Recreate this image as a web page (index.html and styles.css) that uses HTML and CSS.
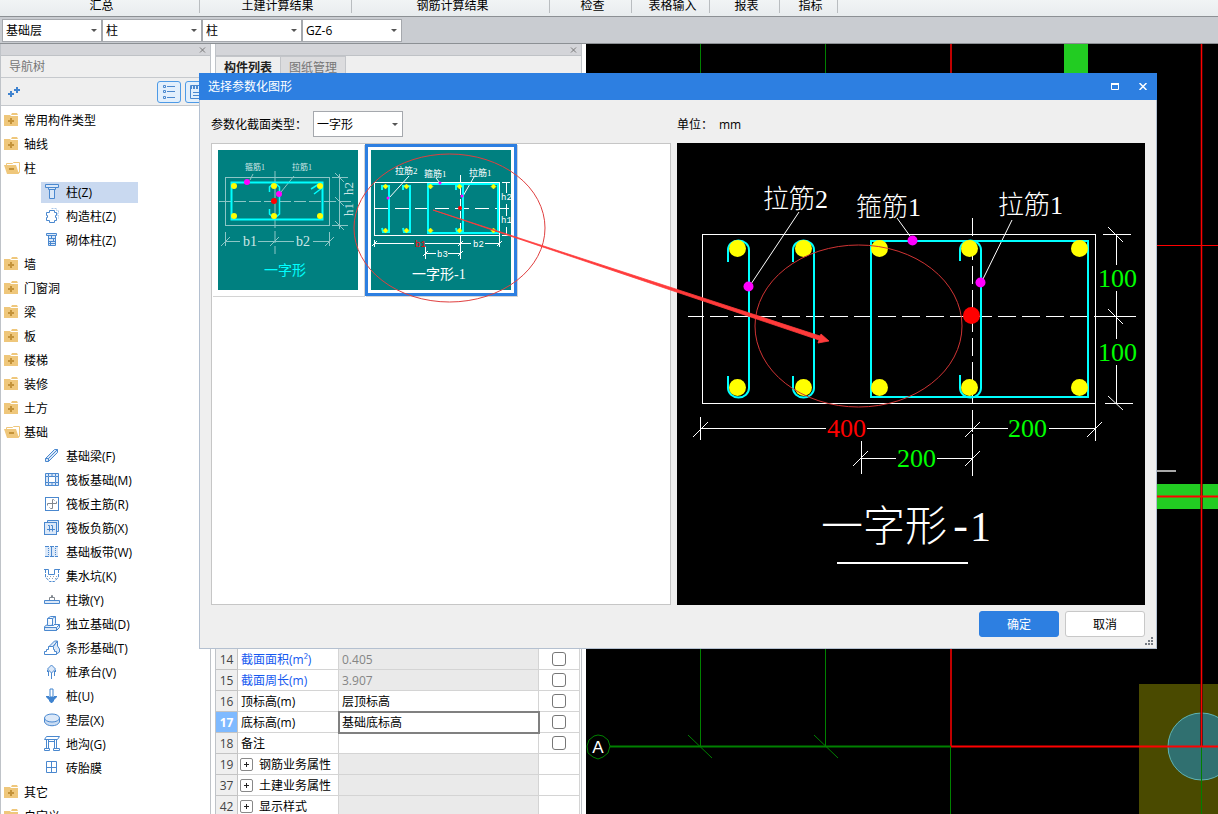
FILE: index.html
```html
<!DOCTYPE html>
<html lang="zh-CN">
<head>
    <meta charset="UTF-8">
    <meta name="viewport" content="width=device-width, initial-scale=1.0">
    <title>选择参数化图形</title>
    <link rel="stylesheet" href="styles.css">
</head>
<body>
    <!-- 图标 -->
    <svg class="sprite" aria-hidden="true">
        <symbol id="i-folder" viewBox="0 0 16 16">
            <path d="M8 1h5l1 2H7z" fill="#efc77b"/>
            <path d="M0 3h6l1 1h7v10H0z" fill="#efc77b"/>
            <path d="M7 6v6M4 9h6" stroke="#c4933a" stroke-width="2"/>
        </symbol>
        <symbol id="i-open" viewBox="0 0 16 16">
            <path d="M2.500 6V3.500h6l1-1h6v10h-3z" fill="#fff" stroke="#efc77b"/>
            <path d="M0 5h12l3 9H3z" fill="#efc77b"/>
            <path d="M5 9h5" stroke="#c4933a" stroke-width="2"/>
        </symbol>
        <symbol id="i-column" viewBox="0 0 16 16">
            <path d="M1.500 0.500h13v3h-13zM4.500 3.500h7v2h-7zM5.500 5.500h5v9h-5z" fill="#dbe8f8" stroke="#4a88cf"/>
        </symbol>
        <symbol id="i-gz" viewBox="0 0 16 16">
            <path d="M5.500 2.500h5v2h2v3h-1v2h1v3h-2v2h-5v-2h-3v-3h1v-2h-1v-3h3z" fill="#fff" stroke="#4a88cf"/>
            <path d="M7.500 0.500h5v2h2v3h-1v2h1v3" fill="none" stroke="#a9c6e8" stroke-dasharray="2 1"/>
        </symbol>
        <symbol id="i-brick" viewBox="0 0 16 16">
            <path d="M2.500 1.500h10v2h-10zM4.500 3.500h7v10h-7zM4 6.500h7M4 9.500h7M4 11.500h7M7.500 4v2M9.500 7v2M6.500 10v3" fill="#dbe8f8" stroke="#4a88cf"/>
        </symbol>
        <symbol id="i-beam" viewBox="0 0 16 16">
            <path d="M1.500 10.500l9-9h3v3l-9 9h-3zM1.500 10.500h3v3M4.500 10.500l9-9" fill="#dbe8f8" stroke="#4a88cf"/>
        </symbol>
        <symbol id="i-raft" viewBox="0 0 16 16">
            <path d="M1.500 1.500h13v12h-13zM4.500 4.500h7v6h-7zM4.500 1v3M11.500 1v3M4.500 11v3M11.500 11v3M1 4.500h3M1 10.500h3M12 4.500h3M12 10.500h3M8 2v3M8 10v3" fill="#dbe8f8" stroke="#4a88cf"/>
            <rect x="5" y="5" width="6" height="5" fill="#fff"/>
        </symbol>
        <symbol id="i-main" viewBox="0 0 16 16">
            <rect x="1.500" y="1.500" width="13" height="13" fill="#fff" stroke="#4a88cf"/>
            <path d="M3.500 9.500v-2h9v-2M10.500 4.500l-1-1h-1v9h-2l-1-1" fill="none" stroke="#82888f"/>
        </symbol>
        <symbol id="i-neg" viewBox="0 0 16 16">
            <path d="M3.500 2.500v-2h11v11h-2" fill="#dbe8f8" stroke="#4a88cf"/>
            <rect x="0.500" y="2.500" width="12" height="12" fill="#dbe8f8" stroke="#4a88cf"/>
            <path d="M4 5.500h1.500v6M7 5.500h1.500v6M3 9.500h8" fill="none" stroke="#4a88cf"/>
        </symbol>
        <symbol id="i-strip" viewBox="0 0 16 16">
            <rect x="1" y="3" width="13" height="10" fill="#dbe8f8"/>
            <path d="M1 2.500h4M6 2.500h4M11 2.500h3M1 12.500h4M6 12.500h4M11 12.500h3M7.500 2v11" stroke="#4a88cf"/>
            <path d="M4.500 4v8M11.500 4v8" stroke="#4a88cf" stroke-dasharray="1 1"/>
        </symbol>
        <symbol id="i-pit" viewBox="0 0 16 16">
            <path d="M0 1.500h4.500v5h6v-5H16" fill="none" stroke="#4a88cf"/>
            <path d="M1.500 2v7l4 4.500h5l4-4.500V2" fill="none" stroke="#4a88cf" stroke-dasharray="3 1"/>
            <path d="M3 8.500h10M5 10.500h7" stroke="#98a3b0" stroke-dasharray="1 2"/>
        </symbol>
        <symbol id="i-pier" viewBox="0 0 16 16">
            <path d="M5.500 8V5.500h5V8M7.500 5V3.500h1V5" fill="none" stroke="#82888f"/>
            <path d="M0.500 8.500h15v3H0.500z" fill="#dbe8f8" stroke="#4a88cf"/>
        </symbol>
        <symbol id="i-single" viewBox="0 0 16 16">
            <path d="M0.500 10.500l3-2h12v3l-3 3h-12zM0.500 11.500h12l3-3M12.500 11.500v3" fill="#dbe8f8" stroke="#4a88cf"/>
            <path d="M3.500 9.500v-7l3-2h5v7l-2 2zM8.500 9.500v-7h-5M8.500 2.500l3-2" fill="#eaf2fc" stroke="#4a88cf"/>
        </symbol>
        <symbol id="i-cont" viewBox="0 0 16 16">
            <path d="M9.500 6l4-5h-3l-6 6M9.500 6l4-5v5l2 3v3l-3 2" fill="#dbe8f8" stroke="#4a88cf"/>
            <path d="M0.500 14.500v-3h2v-2h2V6.500h5v3h1v2h2v3z" fill="#fff" stroke="#4a88cf"/>
        </symbol>
        <symbol id="i-cap" viewBox="0 0 16 16">
            <path d="M7.500 1l4 4-4 4-4-4z" fill="#dbe8f8" stroke="#4a88cf"/>
            <path d="M4.500 7v5M7.500 9v6M10.500 7v5M3.500 6v2M11.500 6v2" stroke="#4a88cf"/>
        </symbol>
        <symbol id="i-pile" viewBox="0 0 16 16">
            <path d="M6 1h3v8H6z" fill="#fff" stroke="#3f83cf" stroke-width="1"/>
            <path d="M2 8h3v1h5V8h3v1l-3 3v1l-2 2H7l-2-2v-1L2 9z" fill="#3f83cf"/>
        </symbol>
        <symbol id="i-pad" viewBox="0 0 16 16">
            <path d="M0.500 6v4c2 5 13 5 15 0V6" fill="#c9dcf3" stroke="#4a88cf"/>
            <ellipse cx="8" cy="6" rx="7.500" ry="4" fill="#dbe8f8" stroke="#4a88cf"/>
        </symbol>
        <symbol id="i-ditch" viewBox="0 0 16 16">
            <path d="M0.500 3.500l2-3h13l-2 3zM2.500 3.500h2v9h-2zM10.500 3.500h2v9h-2zM0.500 12.500h5v2h-5zM9.500 12.500h6v2h-6zM5 5.500h5" fill="#fff" stroke="#4a88cf"/>
        </symbol>
        <symbol id="i-mold" viewBox="0 0 16 16">
            <path d="M2.500 1.500h10v11h-10zM7.500 2v10M3 7.500h9" fill="#fff" stroke="#4a88cf"/>
        </symbol>
    </svg>

    <header class="ribbon">
        <span class="ribbon-group g1">汇总</span>
        <span class="ribbon-group g2">土建计算结果</span>
        <span class="ribbon-group g3">钢筋计算结果</span>
        <span class="ribbon-group g4">检查</span>
        <span class="ribbon-group g5">表格输入</span>
        <span class="ribbon-group g6">报表</span>
        <span class="ribbon-group g7">指标</span>
    </header>

    <div class="toolbar">
        <label class="select"><select aria-label="楼层"><option>基础层</option></select></label>
        <label class="select"><select aria-label="构件类别"><option>柱</option></select></label>
        <label class="select"><select aria-label="构件类型"><option>柱</option></select></label>
        <label class="select"><select aria-label="构件"><option>GZ-6</option></select></label>
    </div>

    <main class="workspace">
        <!-- 导航树 -->
        <nav class="nav-panel">
            <div class="panel-strip">
                <button class="strip-close" aria-label="关闭"><svg width="7" height="6" viewBox="0 0 7 6"><path d="M1 0.500l5 5M6 0.500l-5 5" stroke="#777"/></svg></button>
            </div>
            <div class="panel-title">导航树</div>
            <div class="nav-tools">
                <button class="tool-add" aria-label="新建"><svg width="14" height="14" viewBox="0 0 14 14"><path d="M3 6v6M0 9h6M9 2v6M6 5h6" stroke="#3f83cf" stroke-width="2"/></svg></button>
                <button class="tool-view" aria-label="列表视图">
                    <svg width="16" height="16" viewBox="0 0 16 16"><path d="M2.500 1.500h2v2h-2zM2.500 6.500h2v2h-2zM2.500 12.500h2v2h-2zM6 2.500h8M6 7.500h8M6 13.500h8" fill="none" stroke="#4a88cf"/></svg>
                </button>
                <button class="tool-view" aria-label="图标视图">
                    <svg width="16" height="16" viewBox="0 0 16 16"><path d="M1.500 1.500h13v13h-13zM4 8.500h8M4 11.500h8" fill="none" stroke="#4a88cf"/><path d="M1 3.500h14" stroke="#4a88cf" stroke-width="3" stroke-dasharray="2 1"/></svg>
                </button>
            </div>
            <ul class="tree">
                <li><a href="#"><svg class="icon"><use href="#i-folder"/></svg>常用构件类型</a></li>
                <li><a href="#"><svg class="icon"><use href="#i-folder"/></svg>轴线</a></li>
                <li><a href="#"><svg class="icon"><use href="#i-open"/></svg>柱</a>
                    <ul>
                        <li><a href="#" class="selected"><svg class="icon"><use href="#i-column"/></svg>柱(Z)</a></li>
                        <li><a href="#"><svg class="icon"><use href="#i-gz"/></svg>构造柱(Z)</a></li>
                        <li><a href="#"><svg class="icon"><use href="#i-brick"/></svg>砌体柱(Z)</a></li>
                    </ul>
                </li>
                <li><a href="#"><svg class="icon"><use href="#i-folder"/></svg>墙</a></li>
                <li><a href="#"><svg class="icon"><use href="#i-folder"/></svg>门窗洞</a></li>
                <li><a href="#"><svg class="icon"><use href="#i-folder"/></svg>梁</a></li>
                <li><a href="#"><svg class="icon"><use href="#i-folder"/></svg>板</a></li>
                <li><a href="#"><svg class="icon"><use href="#i-folder"/></svg>楼梯</a></li>
                <li><a href="#"><svg class="icon"><use href="#i-folder"/></svg>装修</a></li>
                <li><a href="#"><svg class="icon"><use href="#i-folder"/></svg>土方</a></li>
                <li><a href="#"><svg class="icon"><use href="#i-open"/></svg>基础</a>
                    <ul>
                        <li><a href="#"><svg class="icon"><use href="#i-beam"/></svg>基础梁(F)</a></li>
                        <li><a href="#"><svg class="icon"><use href="#i-raft"/></svg>筏板基础(M)</a></li>
                        <li><a href="#"><svg class="icon"><use href="#i-main"/></svg>筏板主筋(R)</a></li>
                        <li><a href="#"><svg class="icon"><use href="#i-neg"/></svg>筏板负筋(X)</a></li>
                        <li><a href="#"><svg class="icon"><use href="#i-strip"/></svg>基础板带(W)</a></li>
                        <li><a href="#"><svg class="icon"><use href="#i-pit"/></svg>集水坑(K)</a></li>
                        <li><a href="#"><svg class="icon"><use href="#i-pier"/></svg>柱墩(Y)</a></li>
                        <li><a href="#"><svg class="icon"><use href="#i-single"/></svg>独立基础(D)</a></li>
                        <li><a href="#"><svg class="icon"><use href="#i-cont"/></svg>条形基础(T)</a></li>
                        <li><a href="#"><svg class="icon"><use href="#i-cap"/></svg>桩承台(V)</a></li>
                        <li><a href="#"><svg class="icon"><use href="#i-pile"/></svg>桩(U)</a></li>
                        <li><a href="#"><svg class="icon"><use href="#i-pad"/></svg>垫层(X)</a></li>
                        <li><a href="#"><svg class="icon"><use href="#i-ditch"/></svg>地沟(G)</a></li>
                        <li><a href="#"><svg class="icon"><use href="#i-mold"/></svg>砖胎膜</a></li>
                    </ul>
                </li>
                <li><a href="#"><svg class="icon"><use href="#i-folder"/></svg>其它</a></li>
                <li><a href="#"><svg class="icon"><use href="#i-folder"/></svg>自定义</a></li>
            </ul>
        </nav>

        <!-- 构件列表和属性 -->
        <section class="prop-panel">
            <div class="panel-strip">
                <button class="strip-close" aria-label="关闭"><svg width="7" height="6" viewBox="0 0 7 6"><path d="M1 0.500l5 5M6 0.500l-5 5" stroke="#777"/></svg></button>
            </div>
            <div class="tabs">
                <button class="tab active">构件列表</button>
                <button class="tab">图纸管理</button>
            </div>
            <div class="component-list"></div>
            <table class="props">
                <tr><th>14</th><td class="name link">截面面积(m²)</td><td class="value off">0.405</td><td class="check"><input type="checkbox" aria-label="截面面积附加"></td></tr>
                <tr><th>15</th><td class="name link">截面周长(m)</td><td class="value off">3.907</td><td class="check"><input type="checkbox" aria-label="截面周长附加"></td></tr>
                <tr><th>16</th><td class="name">顶标高(m)</td><td class="value">层顶标高</td><td class="check"><input type="checkbox" aria-label="顶标高附加"></td></tr>
                <tr class="current"><th>17</th><td class="name">底标高(m)</td><td class="value"><input type="text" value="基础底标高" aria-label="底标高"></td><td class="check"><input type="checkbox" aria-label="底标高附加"></td></tr>
                <tr><th>18</th><td class="name">备注</td><td class="value"></td><td class="check"><input type="checkbox" aria-label="备注附加"></td></tr>
                <tr><th>19</th><td class="name"><button class="expand" aria-label="展开"></button>钢筋业务属性</td><td class="value off"></td><td></td></tr>
                <tr><th>37</th><td class="name"><button class="expand" aria-label="展开"></button>土建业务属性</td><td class="value off"></td><td></td></tr>
                <tr><th>42</th><td class="name"><button class="expand" aria-label="展开"></button>显示样式</td><td class="value off"></td><td></td></tr>
            </table>
        </section>

        <!-- 绘图区 -->
        <section class="canvas">
            <svg viewBox="586 44 632 770" preserveAspectRatio="xMinYMin slice">
                <rect x="1139" y="684" width="79" height="130" fill="#4a4a00"/>
                <circle cx="1201.500" cy="746.500" r="33.500" fill="#307070" stroke="#5fb4b4"/>
                <rect x="1064" y="44" width="24" height="60" fill="#22cc22"/>
                <rect x="1100" y="484" width="118" height="25" fill="#22cc22"/>
                <path d="M1150 471h26" stroke="#a8a8a8" stroke-width="2"/>
                <g stroke="#008000" fill="none">
                    <path d="M700.500 44V746M825.500 44V746M950.500 746V814M688 735l24 23M814 735l24 23M1201.500 746V814"/>
                    <path d="M610 746.500H951" stroke-width="2"/>
                    <path d="M594 736l4-1 5 1 5 4 2 6-2 7-5 4-5 2-5-2-5-4-1-7 2-6z"/>
                </g>
                <path d="M951 44V746" stroke="#c00000" stroke-width="2"/>
                <path d="M1201.500 44V746" stroke="#600000" stroke-opacity="0.700" stroke-width="3"/>
                <path d="M1201.500 44V746M1150 245.500h68" stroke="#f00"/>
                <path d="M1150 496.500h68M951 746.500h267" stroke="#f00" stroke-width="2"/>
                <text class="axis" x="598" y="753">A</text>
            </svg>
        </section>
    </main>

    <!-- 选择参数化图形 -->
    <div class="dialog" role="dialog" aria-labelledby="dialog-title">
        <div class="dialog-head">
            <span id="dialog-title">选择参数化图形</span>
            <button aria-label="最大化"><svg width="8" height="7" viewBox="0 0 8 7"><path d="M0.500 1v5.500h7V1M0 1h8" fill="none" stroke="#fff"/><path d="M0 1h8" stroke="#fff" stroke-width="2"/></svg></button>
            <button aria-label="关闭"><svg width="8" height="7" viewBox="0 0 8 7"><path d="M0.500 0l7 7M7.500 0l-7 7" stroke="#fff" stroke-width="1.500"/></svg></button>
        </div>
        <div class="dialog-body">
            <div class="field">
                <label for="section-type">参数化截面类型：</label>
                <span class="select"><select id="section-type"><option>一字形</option></select></span>
            </div>
            <div class="field unit"><span>单位：</span><span>mm</span></div>

            <div class="shape-list">
                <button class="shape" aria-label="一字形">
                    <svg class="cad small" viewBox="218 150 140 140">
                        <rect x="218" y="150" width="140" height="140" fill="#008080"/>
                        <g stroke="#8cc6c6" fill="none">
                            <rect x="225.500" y="177.500" width="104" height="48"/>
                            <path d="M219 201.500H352" stroke-dasharray="12 3"/>
                            <path d="M275 171V254" stroke-dasharray="12 3"/>
                            <path d="M250 180l3-6M281 192l13-16M332 177.500h16M332 225.500h16M339.500 174v55M335 173l9 9M335 197l9 9M335 221l9 9"/>
                            <path d="M225.500 232v14M329.500 232v14M225 241.500h15M258 241.500h36M313 241.500h17M221 246l9-9M270 246l9-9M325 246l9-9"/>
                        </g>
                        <g stroke="#0ff" fill="none">
                            <rect x="231.500" y="182.500" width="91" height="37" stroke-width="2"/>
                            <path d="M269.500 192v-5q5-6 10 0v27q-5 6-10 0v-5M311 189l8-5M314 194l8-6" stroke-width="1.500"/>
                        </g>
                        <g fill="#ff0"><circle cx="234" cy="186" r="3"/><circle cx="274" cy="186" r="3"/><circle cx="320" cy="186" r="3"/><circle cx="234" cy="216" r="3"/><circle cx="274" cy="216" r="3"/><circle cx="320" cy="216" r="3"/></g>
                        <g fill="#f0f"><circle cx="247" cy="182" r="3"/><circle cx="279" cy="194" r="3"/></g>
                        <circle cx="274" cy="201" r="3" fill="#f00"/>
                        <g fill="#cfe6e6">
                            <text x="245" y="170" font-size="8">箍筋1</text>
                            <text x="292" y="170" font-size="8">拉筋1</text>
                            <text x="243" y="246" font-size="14">b1</text>
                            <text x="296" y="246" font-size="14">b2</text>
                            <text transform="translate(353 195) rotate(-90)" font-size="13">h2</text>
                            <text transform="translate(353 216) rotate(-90)" font-size="13">h1</text>
                        </g>
                        <text x="264" y="275" font-size="14" fill="#0ff">一字形</text>
                    </svg>
                </button>
                <button class="shape selected" aria-label="一字形-1">
                    <svg class="cad small" viewBox="371 150 140 140">
                        <rect x="371" y="150" width="140" height="140" fill="#008080"/>
                        <g stroke="#fff" fill="none">
                            <rect x="374.500" y="182.500" width="125" height="53"/>
                            <path d="M375 208.500H510" stroke-dasharray="14 6"/>
                            <path d="M460.500 175V236" stroke-dasharray="8 4"/>
                            <path d="M409 176l-20 22M436 178l4 5M474 177l-11 19M502 182.500h8M502 235.500h8M506.500 182v11M506.500 204v12M506.500 227v9"/>
                            <path d="M374.500 240v7M499.500 236v11M460.500 236v23M425.500 247v12M374 243.500h40M425 243.500h46M485 243.500h14M425 253.500h11M448 253.500h12M372 246l5-5M458 246l5-5M497 246l5-5M423 256l5-5M458 256l5-5"/>
                        </g>
                        <g stroke="#0ff" stroke-width="2" fill="none">
                            <rect x="428" y="184" width="70" height="49"/>
                            <path d="M382 190v-4h7v46h-6l-1-4M403 190v-4h7v46h-6l-1-4M456 190v-4h7v46h-6l-1-4"/>
                        </g>
                        <path d="M383 186.500l2.500-2.500 2.500 2.500-2.500 2.500zM404 186.500l2.500-2.500 2.500 2.500-2.500 2.500zM428 186.500l2.500-2.500 2.500 2.500-2.500 2.500zM457 186.500l2.500-2.500 2.500 2.500-2.500 2.500zM491 186.500l2.500-2.500 2.500 2.500-2.500 2.500zM383 230.500l2.500-2.500 2.500 2.500-2.500 2.500zM404 230.500l2.500-2.500 2.500 2.500-2.500 2.500zM428 230.500l2.500-2.500 2.500 2.500-2.500 2.500zM457 230.500l2.500-2.500 2.500 2.500-2.500 2.500zM491 230.500l2.500-2.500 2.500 2.500-2.500 2.500z" fill="#ff0" stroke="#ff0" stroke-width="0.500"/>
                        <g fill="#f0f"><circle cx="388" cy="198" r="1.500"/><circle cx="440" cy="183" r="1.500"/><circle cx="462" cy="196" r="1.500"/></g>
                        <circle cx="460" cy="208" r="2" fill="#f00"/>
                        <g fill="#fff">
                            <text x="395" y="174" font-size="9">拉筋2</text>
                            <text x="424" y="177" font-size="9">箍筋1</text>
                            <text x="469" y="176" font-size="9">拉筋1</text>
                            <text class="dim" x="501" y="200" font-size="9">h2</text>
                            <text class="dim" x="501" y="223" font-size="9">h1</text>
                            <text class="dim" x="473" y="247" font-size="9">b2</text>
                            <text class="dim" x="437" y="257" font-size="9">b3</text>
                            <text x="412" y="279" font-size="14">一字形-1</text>
                        </g>
                        <text class="dim" x="415" y="247" font-size="9" fill="#f00">b1</text>
                    </svg>
                </button>
            </div>

            <div class="preview">
                <svg class="cad" viewBox="677 143 468 462">
                    <rect x="677" y="143" width="468" height="462" fill="#000"/>
                    <g stroke="#fff" fill="none">
                        <rect x="702.500" y="234.500" width="393" height="169"/>
                        <path d="M688 316.500H1092" stroke-dasharray="18 6" stroke-dashoffset="2"/>
                        <path d="M1094 316.500h42"/>
                        <path d="M972.500 218V404" stroke-dasharray="18 6"/>
                        <path d="M972.500 410v22M972.500 434v42"/>
                        <!-- 引线 -->
                        <path d="M799 212l-48 72M897 218l13 18M1012 220l-29 59"/>
                        <!-- 右侧标注 -->
                        <path d="M1103 234.500h28M1105 403.500h28M1116.500 234v31M1116.500 291v48M1116.500 365v38M1108 227l15 15M1108 309l15 15M1108 396l15 14"/>
                        <!-- 底部标注 -->
                        <path d="M700.500 417v23M1095.500 404v37M700 428.500h126M867 428.500h141M1049 428.500h46M693 437l15-15M965 437l15-15M1087 437l15-15"/>
                        <path d="M861.500 441v33M861 458.500h35M937 458.500h35M853 466l15-15M965 466l15-15"/>
                    </g>
                    <g stroke="#0ff" stroke-width="2" fill="none">
                        <rect x="871" y="241" width="217" height="156"/>
                        <path d="M728 262v-12a10.500 9.500 0 0 1 21 0v138a10.500 9.500 0 0 1-21 0v-12"/>
                        <path d="M793 262v-12a10.500 9.500 0 0 1 21 0v138a10.500 9.500 0 0 1-21 0v-12"/>
                        <path d="M960 261v-11a10.500 9.500 0 0 1 21 0v138a10.500 9.500 0 0 1-21 0v-13"/>
                    </g>
                    <g fill="#ff0">
                        <circle cx="737.500" cy="248.500" r="8.500"/><circle cx="803.500" cy="248.500" r="8.500"/><circle cx="879.500" cy="248.500" r="8.500"/><circle cx="969.500" cy="248.500" r="8.500"/><circle cx="1079.500" cy="248.500" r="8.500"/>
                        <circle cx="737.500" cy="387.500" r="8.500"/><circle cx="803.500" cy="387.500" r="8.500"/><circle cx="879.500" cy="387.500" r="8.500"/><circle cx="969.500" cy="387.500" r="8.500"/><circle cx="1079.500" cy="387.500" r="8.500"/>
                    </g>
                    <g fill="#f0f"><circle cx="748.500" cy="286.500" r="5"/><circle cx="912.500" cy="240.500" r="5"/><circle cx="980.500" cy="282.500" r="5"/></g>
                    <circle cx="971.500" cy="315.500" r="8.500" fill="#f00"/>
                    <g font-size="26" fill="#fff">
                        <text x="763" y="208">拉筋2</text>
                        <text x="856" y="216">箍筋1</text>
                        <text x="998" y="214">拉筋1</text>
                    </g>
                    <g font-size="26" fill="#0f0">
                        <text x="1098" y="287">100</text>
                        <text x="1098" y="361">100</text>
                        <text x="1008" y="437">200</text>
                        <text x="897" y="467">200</text>
                        <text x="827" y="437" fill="#f00">400</text>
                    </g>
                    <text font-size="42" fill="#fff" x="821" y="541">一字形<tspan class="dim" x="948">-</tspan><tspan x="970">1</tspan></text>
                    <path d="M837 563h131" stroke="#fff" stroke-width="2"/>
                </svg>
            </div>

            <div class="actions">
                <button class="btn primary">确定</button>
                <button class="btn">取消</button>
            </div>
        </div>
        <svg class="grip" width="8" height="8" viewBox="0 0 8 8"><path d="M6 0h2v2H6zM3 3h2v2H3zM6 3h2v2H6zM0 6h2v2H0zM3 6h2v2H3zM6 6h2v2H6z" fill="#777c84"/></svg>
        <!-- 红色批注 -->
        <svg class="marks" viewBox="199 73 958 576">
            <ellipse cx="449.500" cy="228" rx="95.500" ry="74" fill="none" stroke="#e04040"/>
            <ellipse cx="858.500" cy="326" rx="103.500" ry="81" fill="none" stroke="#d03434"/>
            <path d="M433 210L820 336l1-2 8 7-11 2 1-3z" fill="#ff3b3b" stroke="#ff3b3b" stroke-width="0.800"/>
        </svg>
    </div>
</body>
</html>
```
FILE: styles.css
```css
* {
    box-sizing: border-box;
}

body {
    margin: 0;
    height: 100vh;
    display: flex;
    flex-direction: column;
    position: relative;
    overflow: hidden;
    background: #fff;
    color: #000;
    font: 12px/16px "Open Sans", "Noto Sans CJK SC", sans-serif;
}

button,
input,
select {
    font: inherit;
    color: inherit;
}

button {
    padding: 0;
    border: none;
    background: none;
}

a {
    color: inherit;
    text-decoration: none;
}

.sprite {
    position: absolute;
    width: 0;
    height: 0;
}

/* 顶部功能区 */
.ribbon {
    display: flex;
    flex: none;
    height: 17px;
    background: linear-gradient(#f1f4f5, #e8ecee);
    border-bottom: 1px solid #8c9094;
}

.ribbon-group {
    height: 13px;
    padding-left: 4px;
    line-height: 12px;
    text-align: center;
    white-space: nowrap;
    border-right: 1px solid #b9bdc0;
}

.g1 { width: 200px; }
.g2 { width: 152px; }
.g3 { width: 198px; }
.g4 { width: 82px; }
.g5 { width: 78px; }
.g6 { width: 70px; }
.g7 { width: 58px; }

.toolbar {
    display: flex;
    flex: none;
    height: 27px;
    padding: 2px;
    background: #c9ccd1;
    border-bottom: 1px solid #8c9094;
}

.toolbar .select {
    width: 100px;
}

.select {
    position: relative;
    display: block;
}

.select select {
    display: block;
    appearance: none;
    width: 100%;
    height: 23px;
    padding: 0 16px 0 3px;
    background: #fff;
    border: 1px solid #a5a8ad;
    border-radius: 0;
}

.select::after {
    content: "";
    position: absolute;
    right: 5px;
    top: 50%;
    margin-top: -1px;
    border: 3px solid transparent;
    border-top-color: #555;
    border-bottom: none;
}

/* 工作区 */
.workspace {
    display: flex;
    flex: 1;
    min-height: 0;
    overflow: hidden;
}

.nav-panel {
    flex: none;
    width: 211px;
    border: 1px solid #bfc3c8;
    border-width: 0 1px;
    overflow: hidden;
}

.panel-strip {
    display: flex;
    justify-content: flex-end;
    height: 12px;
    padding-right: 4px;
    background: #d4d5d9;
    border-bottom: 1px solid #bfc2c6;
}

.strip-close {
    display: flex;
    align-items: center;
}

.panel-title {
    height: 22px;
    padding-left: 8px;
    line-height: 21px;
    color: #767676;
    background: #efefef;
    border-bottom: 1px solid #c6c9cd;
}

.nav-tools {
    display: flex;
    align-items: center;
    gap: 4px;
    height: 28px;
    padding: 0 1px 0 7px;
    background: #efefef;
    border-bottom: 1px solid #c6c9cd;
}

.tool-add {
    display: flex;
    margin-right: auto;
}

.tool-view {
    display: flex;
    align-items: center;
    justify-content: center;
    width: 24px;
    height: 22px;
    background: #e2effc;
    border: 1px solid #4d9ae6;
    border-radius: 3px;
}

.tree,
.tree ul {
    margin: 0;
    padding: 0;
    list-style: none;
}

.tree {
    padding-top: 2px;
}

.tree a {
    display: flex;
    align-items: center;
    gap: 4px;
    height: 24px;
    padding: 2px 0 0 3px;
    white-space: nowrap;
}

.tree ul a {
    gap: 6px;
    width: 97px;
    margin-left: 40px;
}

.tree ul .selected {
    height: 21px;
    margin-top: 2px;
    margin-bottom: 1px;
    padding-top: 0;
    background: #c9d9f0;
}

.icon {
    flex: none;
    width: 16px;
    height: 16px;
    margin-bottom: 2px;
    overflow: visible;
}

/* 属性面板 */
.prop-panel {
    flex: none;
    width: 367px;
    margin: 0 4px;
    border: 1px solid #bfc3c8;
    border-width: 0 1px;
    overflow: hidden;
}

.tabs {
    display: flex;
    height: 22px;
    background: #efefef;
}

.tab {
    width: 65px;
    color: #767676;
    background: #dcdcde;
    border: 1px solid #c3c5c9;
    border-width: 1px 1px 0 0;
}

.tab.active {
    font-weight: bold;
    color: #222;
    background: #efefef;
}

.component-list {
    height: 571px;
}

.props {
    width: 364px;
    table-layout: fixed;
    border-collapse: separate;
    border-spacing: 0;
}

.props th,
.props td {
    height: 21px;
    padding: 2px 0 0;
    line-height: 18px;
    text-align: left;
    white-space: nowrap;
    border: 1px solid #d4d4d4;
    border-width: 0 1px 1px 0;
}

.props th {
    width: 22px;
    text-align: center;
    font-weight: normal;
    color: #444;
    background: #efefef;
    border-color: #c4c4c4;
}

.props .name {
    width: 101px;
    padding-left: 3px;
}

.props .link {
    color: #1458f0;
}

.props .value {
    width: 200px;
    padding-left: 3px;
}

.props .off {
    color: #858585;
    background: #eaeaea;
}

.props .check {
    padding: 0;
}

.props .check input {
    appearance: none;
    display: block;
    width: 14px;
    height: 14px;
    margin: 0 auto;
    background: #fff;
    border: 1px solid #777;
    border-radius: 3px;
}

.props .current th {
    font-weight: bold;
    color: #fff;
    background: #7fbaff;
}

.props .current .value {
    outline: 2px solid #808080;
    outline-offset: -1px;
}

.props input[type="text"] {
    display: block;
    width: 100%;
    height: 18px;
    padding: 0;
    border: none;
    background: none;
}

.expand {
    width: 13px;
    height: 13px;
    margin: 0 6px 0 -1px;
    vertical-align: -1px;
    border: 1px solid #888;
    border-radius: 2px;
    background:
        linear-gradient(#222, #222) center / 5px 1px no-repeat,
        linear-gradient(#222, #222) center / 1px 5px no-repeat,
        #fff;
}

/* 绘图区 */
.canvas {
    flex: 1;
    min-width: 0;
    background: #000;
    overflow: hidden;
}

.canvas svg {
    display: block;
    width: 100%;
    height: 100%;
}

.axis {
    font: 17px "Liberation Sans", sans-serif;
    fill: #fff;
    text-anchor: middle;
}

/* 对话框 */
.dialog {
    position: absolute;
    top: 73px;
    left: 199px;
    right: 61px;
    background: #efefef;
    border: 1px solid #b4c0d0;
    border-top: none;
}

.dialog-head {
    display: flex;
    align-items: center;
    height: 27px;
    margin: 0 -1px;
    padding: 0 4px 0 9px;
    color: #fff;
    background: #2d7fe1;
}

.dialog-head span {
    flex: 1;
}

.dialog-head button {
    display: flex;
    align-items: center;
    justify-content: center;
    width: 20px;
    height: 20px;
    margin-left: 8px;
}

.dialog-body {
    display: grid;
    grid-template-columns: minmax(0, 1fr) 468px;
    gap: 6px;
    padding: 11px;
}

.field {
    display: flex;
    align-items: center;
    height: 26px;
}

.field label {
    width: 102px;
    padding-top: 2px;
    white-space: nowrap;
}

.field .select {
    width: 90px;
}

.field select {
    height: 26px;
    padding-top: 2px;
}

.unit {
    padding-top: 2px;
}

.unit span:first-child {
    width: 42px;
}

.shape-list {
    display: flex;
    align-items: flex-start;
    gap: 1px;
    background: #fff;
    border: 1px solid #c6c6c6;
}

.shape {
    padding: 3px;
    background: #fff;
    border: 3px solid #fff;
    box-shadow: 1px 1px 0 #d4d4d4;
}

.shape.selected {
    border-color: #2d7fe1;
}

.shape svg {
    display: block;
    width: 140px;
    height: 140px;
}

.preview svg {
    display: block;
    width: 100%;
}

.cad {
    font-family: "Liberation Serif", "Noto Sans CJK SC", serif;
    font-weight: 300;
}

.cad.small {
    font-weight: 400;
}

.cad .dim {
    font-family: "Liberation Mono", monospace;
}

.actions {
    grid-column: 1 / -1;
    display: flex;
    justify-content: flex-end;
    gap: 6px;
}

.btn {
    width: 80px;
    height: 26px;
    padding-top: 2px;
    background: #fff;
    border: 1px solid #c8c8c8;
    border-radius: 3px;
}

.btn.primary {
    color: #fff;
    background: #2d7fe1;
    border-color: #2d7fe1;
}

.grip {
    position: absolute;
    right: 3px;
    bottom: 3px;
}

.marks {
    position: absolute;
    top: 0;
    left: -1px;
    width: 958px;
    height: 576px;
    pointer-events: none;
}
```
